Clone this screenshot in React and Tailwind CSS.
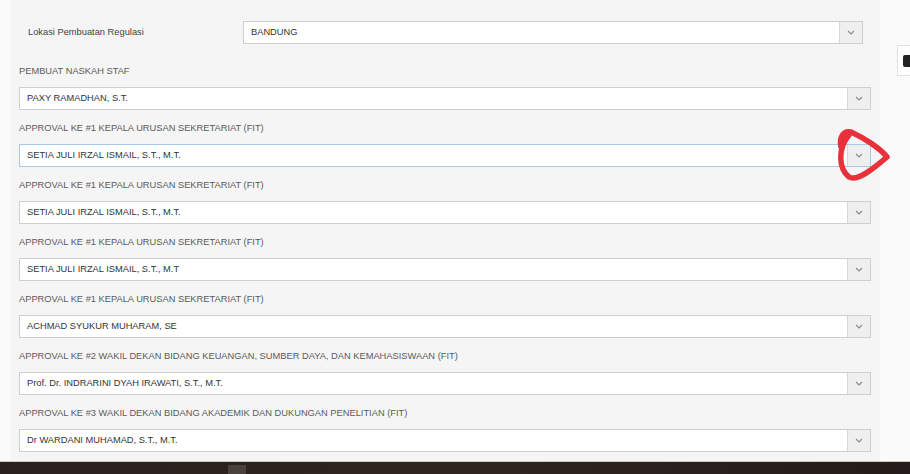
import React from 'react';

const fields = [
  { label: 'PEMBUAT NASKAH STAF', value: 'PAXY RAMADHAN, S.T.' },
  { label: 'APPROVAL KE #1 KEPALA URUSAN SEKRETARIAT (FIT)', value: 'SETIA JULI IRZAL ISMAIL, S.T., M.T.', focused: true },
  { label: 'APPROVAL KE #1 KEPALA URUSAN SEKRETARIAT (FIT)', value: 'SETIA JULI IRZAL ISMAIL, S.T., M.T.' },
  { label: 'APPROVAL KE #1 KEPALA URUSAN SEKRETARIAT (FIT)', value: 'SETIA JULI IRZAL ISMAIL, S.T., M.T' },
  { label: 'APPROVAL KE #1 KEPALA URUSAN SEKRETARIAT (FIT)', value: 'ACHMAD SYUKUR MUHARAM, SE' },
  { label: 'APPROVAL KE #2 WAKIL DEKAN BIDANG KEUANGAN, SUMBER DAYA, DAN KEMAHASISWAAN (FIT)', value: 'Prof. Dr. INDRARINI DYAH IRAWATI, S.T., M.T.' },
  { label: 'APPROVAL KE #3 WAKIL DEKAN BIDANG AKADEMIK DAN DUKUNGAN PENELITIAN (FIT)', value: 'Dr WARDANI MUHAMAD, S.T., M.T.' },
];

const Chevron = () => (
  <svg width="8" height="5" viewBox="0 0 8 5" fill="none">
    <path d="M1 1 L4 4 L7 1" stroke="#8a8a8a" strokeWidth="1.2" />
  </svg>
);

const Select = ({ value, focused, className = '' }) => (
  <div
    className={`flex h-[23px] bg-white border ${focused ? 'border-[#a9c9ec]' : 'border-[#cfcfcf]'} ${className}`}
  >
    <div className="flex-1 flex items-center pl-[7px] text-[9.3px] text-[#333]">{value}</div>
    <div className="w-[23px] flex items-center justify-center bg-[#efefef] border-l border-[#d6d6d6]">
      <Chevron />
    </div>
  </div>
);

export default function App() {
  return (
    <div className="relative w-[910px] h-[474px] flex flex-col bg-[#fafafa] overflow-hidden font-['Liberation_Sans',Arial,sans-serif]">
      <div className="flex flex-1">
        <div className="w-[10px] shrink-0" />
        <div className="w-[870px] shrink-0 bg-[#f5f5f5] pl-[9px] pr-[9px]">
          <div className="flex items-center pt-[21px] pl-[9px] pr-[8px]">
            <div className="w-[215px] shrink-0 text-[9.3px] text-[#444]">Lokasi Pembuatan Regulasi</div>
            <Select value="BANDUNG" className="flex-1" />
          </div>
          <div className="pt-[21px] flex flex-col gap-[12px]">
            {fields.map((f, i) => (
              <div key={i} className="flex flex-col gap-[8px]">
                <div className="h-[14px] flex items-center text-[9.3px] text-[#5a5a5a]">{f.label}</div>
                <Select value={f.value} focused={f.focused} />
              </div>
            ))}
          </div>
        </div>
        <div className="flex-1 pt-[45px] pl-[17px]">
          <div className="w-[20px] h-[31px] bg-white border border-[#e2e2e2] flex items-center pl-[5px]">
            <div className="w-[10px] h-[12px] bg-[#222] rounded-[2px]" />
          </div>
        </div>
      </div>
      <div className="h-[1px] bg-[#cfcac6]" />
      <div className="h-[12px] bg-gradient-to-r from-[#2a201d] via-[#30241f] to-[#241c1a] flex">
        <div className="ml-[228px] mt-[3px] w-[18px] h-[9px] bg-[#4a403c]" />
      </div>
      <svg className="absolute left-0 top-0 pointer-events-none" width="910" height="474" viewBox="0 0 910 474">
        <path
          d="M849 135 C838 148 838 168 849 177 C857 182 873 169 887 157 C880 148 864 138 851 132 C843 130 839 138 841 147"
          stroke="#e8313a"
          strokeWidth="5.5"
          fill="none"
          strokeLinecap="round"
          strokeLinejoin="round"
        />
      </svg>
    </div>
  );
}
